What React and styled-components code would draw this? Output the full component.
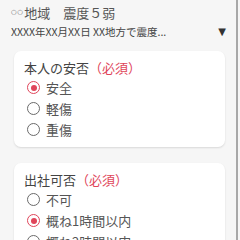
import React from 'react'
import styled, { createGlobalStyle } from 'styled-components'

const GlobalStyle = createGlobalStyle`
    html, body {
        margin : 0;
        padding : 0;
        background : #f6f6f6;
        font-family : "Noto Sans CJK JP", "Noto Sans", sans-serif;
        overflow : hidden;
    }
`

const Page = styled.div`
    position : relative;
    width : 240px;
    height : 240px;
    overflow : hidden;
    background : #f6f6f6;
`
const ScrollLine = styled.div`
    position : absolute;
    top : 0;
    right : 2px;
    width : 2px;
    height : 100%;
    background : #a8a8a8;
`
const Header = styled.div`
    padding : 4px 14px 0 11px;
    color : #555;
`
const Area = styled.div`
    font-size : 13px;
    line-height : 17px;
    height : 17px;
    display : flex;
    align-items : center;
`
const Dots = styled.span`
    font-family : "DejaVu Sans", sans-serif;
    font-size : 6.5px;
    letter-spacing : 0.5px;
    color : #666;
    margin-right : 1px;
`
const Spacer = styled.span`
    display : inline-block;
    width : ${({ w }) => w}px;
`
const Summary = styled.div`
    margin-top : 4px;
    display : flex;
    justify-content : space-between;
    align-items : center;
    font-size : 10.5px;
    line-height : 14px;
    color : #444;
`
const Arrow = styled.span`
    font-family : "DejaVu Sans", sans-serif;
    font-size : 10px;
    color : #333;
`
const Cards = styled.div`
    display : flex;
    flex-direction : column;
    gap : 16px;
    padding : 12px 15px 0 14px;
`
const Card = styled.div`
    background : #fff;
    border-radius : 7px;
    box-shadow : 0 1px 2px rgba(0, 0, 0, 0.12);
    padding : 10px 10px 7px;
`
const Title = styled.div`
    font-size : 13px;
    line-height : 14px;
    color : #444;
    margin-bottom : 2px;
`
const Required = styled.span`
    color : #e0455a;
`
const Option = styled.div`
    display : flex;
    align-items : center;
    height : 21px;
    padding-left : 3px;
    gap : 6px;
    font-size : 13px;
    color : #555;
`
const Radio = styled.span`
    box-sizing : border-box;
    width : 13px;
    height : 13px;
    border-radius : 50%;
    border : 1.5px solid ${({ checked }) => (checked ? '#e0455a' : '#6a6a6a')};
    display : flex;
    align-items : center;
    justify-content : center;
    &::after {
        content : '';
        width : 6px;
        height : 6px;
        border-radius : 50%;
        background : #e0455a;
        display : ${({ checked }) => (checked ? 'block' : 'none')};
    }
`

const questions = [
    { title: '本人の安否', options: ['安全', '軽傷', '重傷'], value: 0 },
    { title: '出社可否', options: ['不可', '概ね1時間以内', '概ね2時間以内'], value: 1 },
]

const App = () => {
    return (
        <Page>
            <GlobalStyle />
            <Header>
                <Area>
                    <Dots>○○</Dots>地域<Spacer w={13} />震度５弱
                </Area>
                <Summary>
                    <span>XXXX年XX月XX日 XX地方で震度...</span>
                    <Arrow>▼</Arrow>
                </Summary>
            </Header>
            <Cards>
                {questions.map((q) => (
                    <Card key={q.title}>
                        <Title>
                            {q.title}<Required>（必須）</Required>
                        </Title>
                        {q.options.map((o, i) => (
                            <Option key={o}>
                                <Radio checked={i === q.value} />
                                {o}
                            </Option>
                        ))}
                    </Card>
                ))}
            </Cards>
            <ScrollLine />
        </Page>
    )
}

export default App
